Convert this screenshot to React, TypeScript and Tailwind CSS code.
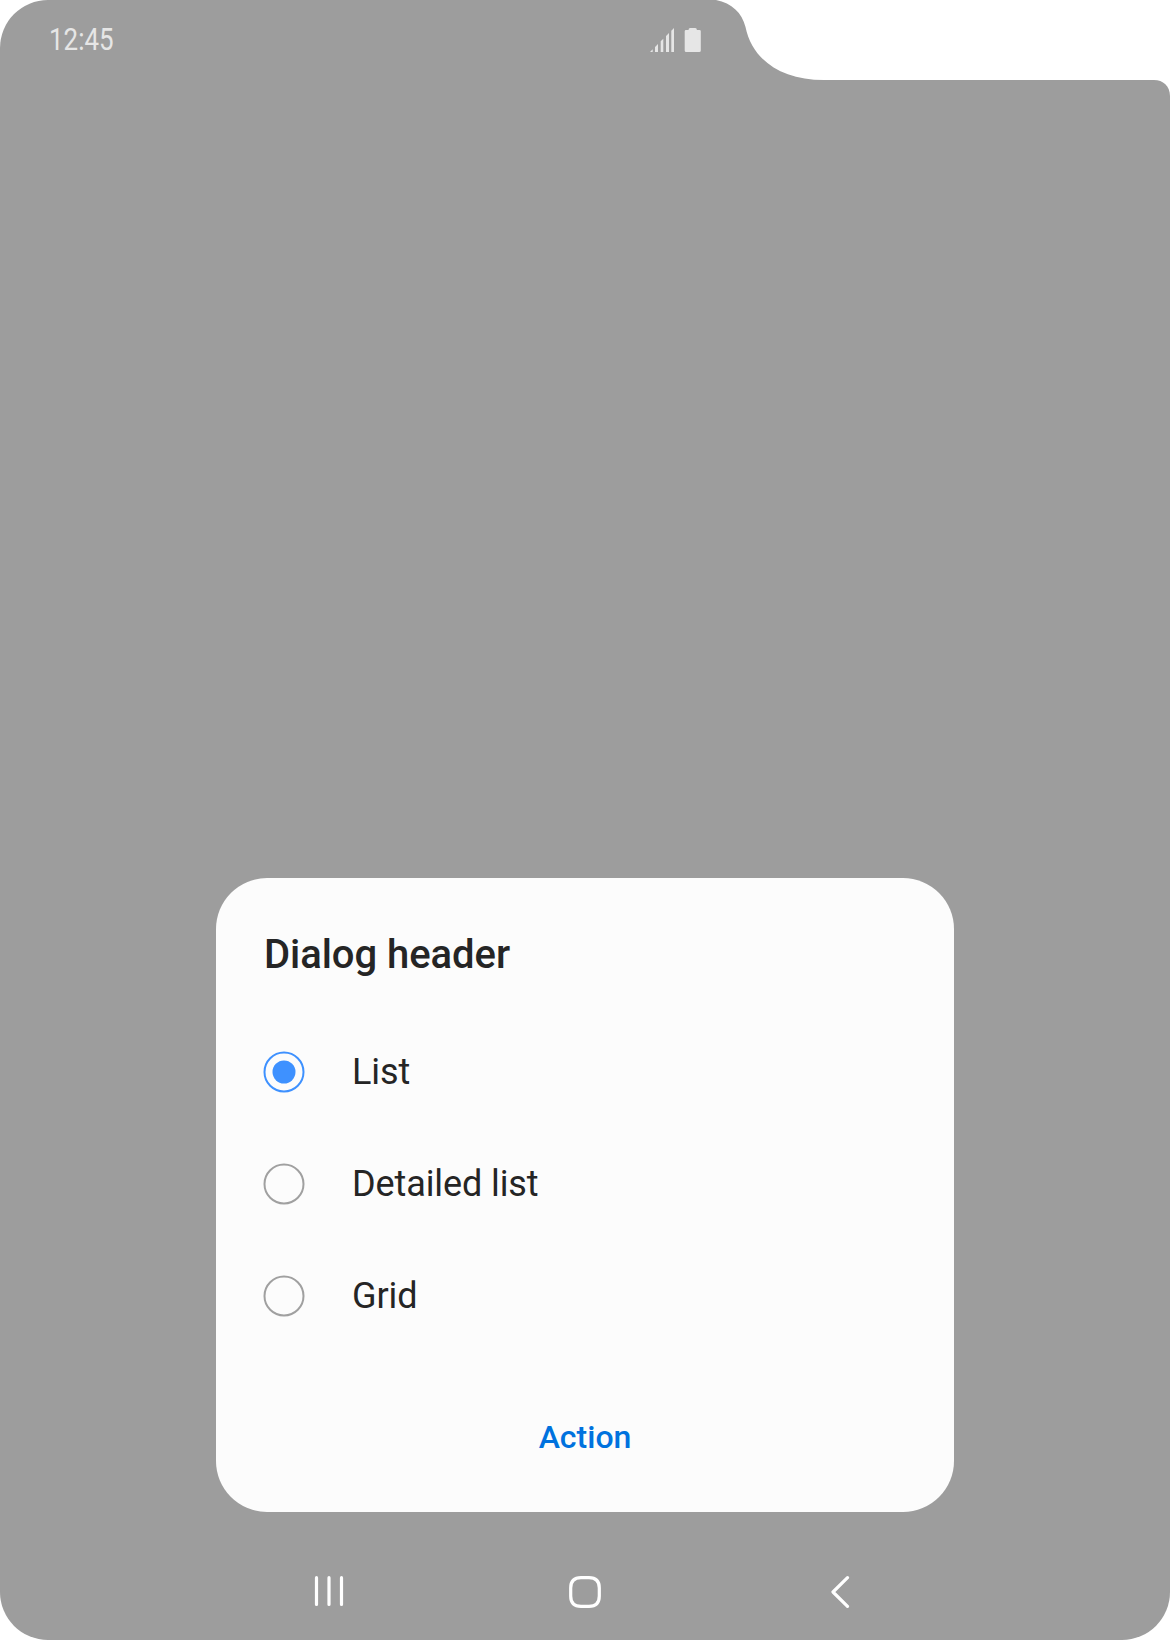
import { useState } from "react";

const OPTIONS = ["List", "Detailed list", "Grid"];

function CameraNotch() {
  return (
    <svg className="absolute top-0 right-0" width="460" height="96" viewBox="710 0 460 96" fill="#fff" aria-hidden="true">
      <path d="M716 0C732 3 742 13 745.5 27C752 59 780 80 824 80H1154C1163 80 1170 86 1170 96V0Z" />
    </svg>
  );
}

function SignalIcon() {
  return (
    <svg width="24" height="24" viewBox="0 0 24 24" fill="#e6e6e6" aria-hidden="true">
      <path d="M0 24L2.7 21.3V24ZM5 19L8 16V24H5ZM10.7 13.3L13.3 10.7V24H10.7ZM16 8L19 5V24H16ZM21.3 2.7L24 0V24H21.3Z" />
    </svg>
  );
}

function BatteryIcon() {
  return (
    <svg width="17" height="24" viewBox="0 0 17 24" fill="#e6e6e6" aria-hidden="true">
      <path d="M4.600 1.500Q4.600 0 6.100 0H11.300Q12.800 0 12.800 1.500V2H15.500Q16.800 2 16.800 3.300V22.500Q16.800 24 15.300 24H2.200Q.7 24 .7 22.500V3.300Q.7 2 2 2H4.600Z" />
    </svg>
  );
}

function StatusBar() {
  return (
    <header className="flex h-20 w-[701px] items-center justify-between pl-[49px]">
      <span className="origin-left scale-x-[0.81] pb-[2px] text-[32px] leading-10 text-[#e6e6e6]">12:45</span>
      <div className="flex items-center gap-[10px]">
        <SignalIcon />
        <BatteryIcon />
      </div>
    </header>
  );
}

function Radio({ checked }: { checked: boolean }) {
  return (
    <svg width="42" height="42" viewBox="0 0 42 42" fill="none" aria-hidden="true">
      <circle cx="21" cy="21" r="19.5" stroke={checked ? "#3e91ff" : "#a0a0a0"} strokeWidth="2" />
      {checked && <circle cx="21" cy="21" r="11.5" fill="#3e91ff" />}
    </svg>
  );
}

function Dialog() {
  const [selected, setSelected] = useState("List");
  return (
    <section role="dialog" className="mx-auto flex h-[634px] w-[738px] flex-col rounded-[51px] bg-[#fcfcfc] px-12 pt-[54px] text-[#252525]">
      <h1 className="text-[40px] leading-[46px] font-medium tracking-[-0.05px]">Dialog header</h1>
      <div role="radiogroup" className="mt-[38px] flex flex-col">
        {OPTIONS.map((option) => (
          <button
            key={option}
            role="radio"
            aria-checked={selected === option}
            onClick={() => setSelected(option)}
            className="-ml-px flex h-28 items-center gap-[47px] text-left text-[36px] leading-[42px] tracking-[-0.1px]"
          >
            <Radio checked={selected === option} />
            <span>{option}</span>
          </button>
        ))}
      </div>
      <button className="mx-auto mt-[65px] text-[32px] leading-[40px] font-medium text-[#0072de]">Action</button>
    </section>
  );
}

function NavigationBar() {
  return (
    <nav className="mt-[64px] ml-[314px] flex h-8 w-[536px] items-center">
      <button aria-label="Recents">
        <svg width="30" height="32" viewBox="0 0 30 32" stroke="#fff" strokeWidth="3.2" strokeLinecap="round">
          <path d="M2.5 1.7V28.5M15 1.7V28.5M27.5 1.7V28.5" />
        </svg>
      </button>
      <button aria-label="Home" className="ml-[225px]">
        <svg width="32" height="32" viewBox="0 0 32 32" fill="none" stroke="#fff" strokeWidth="3.2">
          <path d="M12 1.7H20C27 1.7 30.3 5 30.3 12V20C30.3 27 27 30.3 20 30.3H12C5 30.3 1.7 27 1.7 20V12C1.7 5 5 1.7 12 1.7Z" />
        </svg>
      </button>
      <button aria-label="Back" className="ml-auto">
        <svg width="20" height="32" viewBox="0 0 20 32" fill="none" stroke="#fff" strokeWidth="3.2" strokeLinecap="round" strokeLinejoin="round">
          <path d="M17.500 1.700L3 16L17.500 30.300" />
        </svg>
      </button>
    </nav>
  );
}

export default function App() {
  return (
    <main className="h-[1642px] w-[1170px] bg-white font-['Roboto',sans-serif]">
      <div className="relative flex h-[1640px] flex-col overflow-hidden rounded-[48px] rounded-tr-none bg-[#9d9d9d]">
        <CameraNotch />
        <StatusBar />
        <div className="mt-[798px]">
          <Dialog />
        </div>
        <NavigationBar />
      </div>
    </main>
  );
}
